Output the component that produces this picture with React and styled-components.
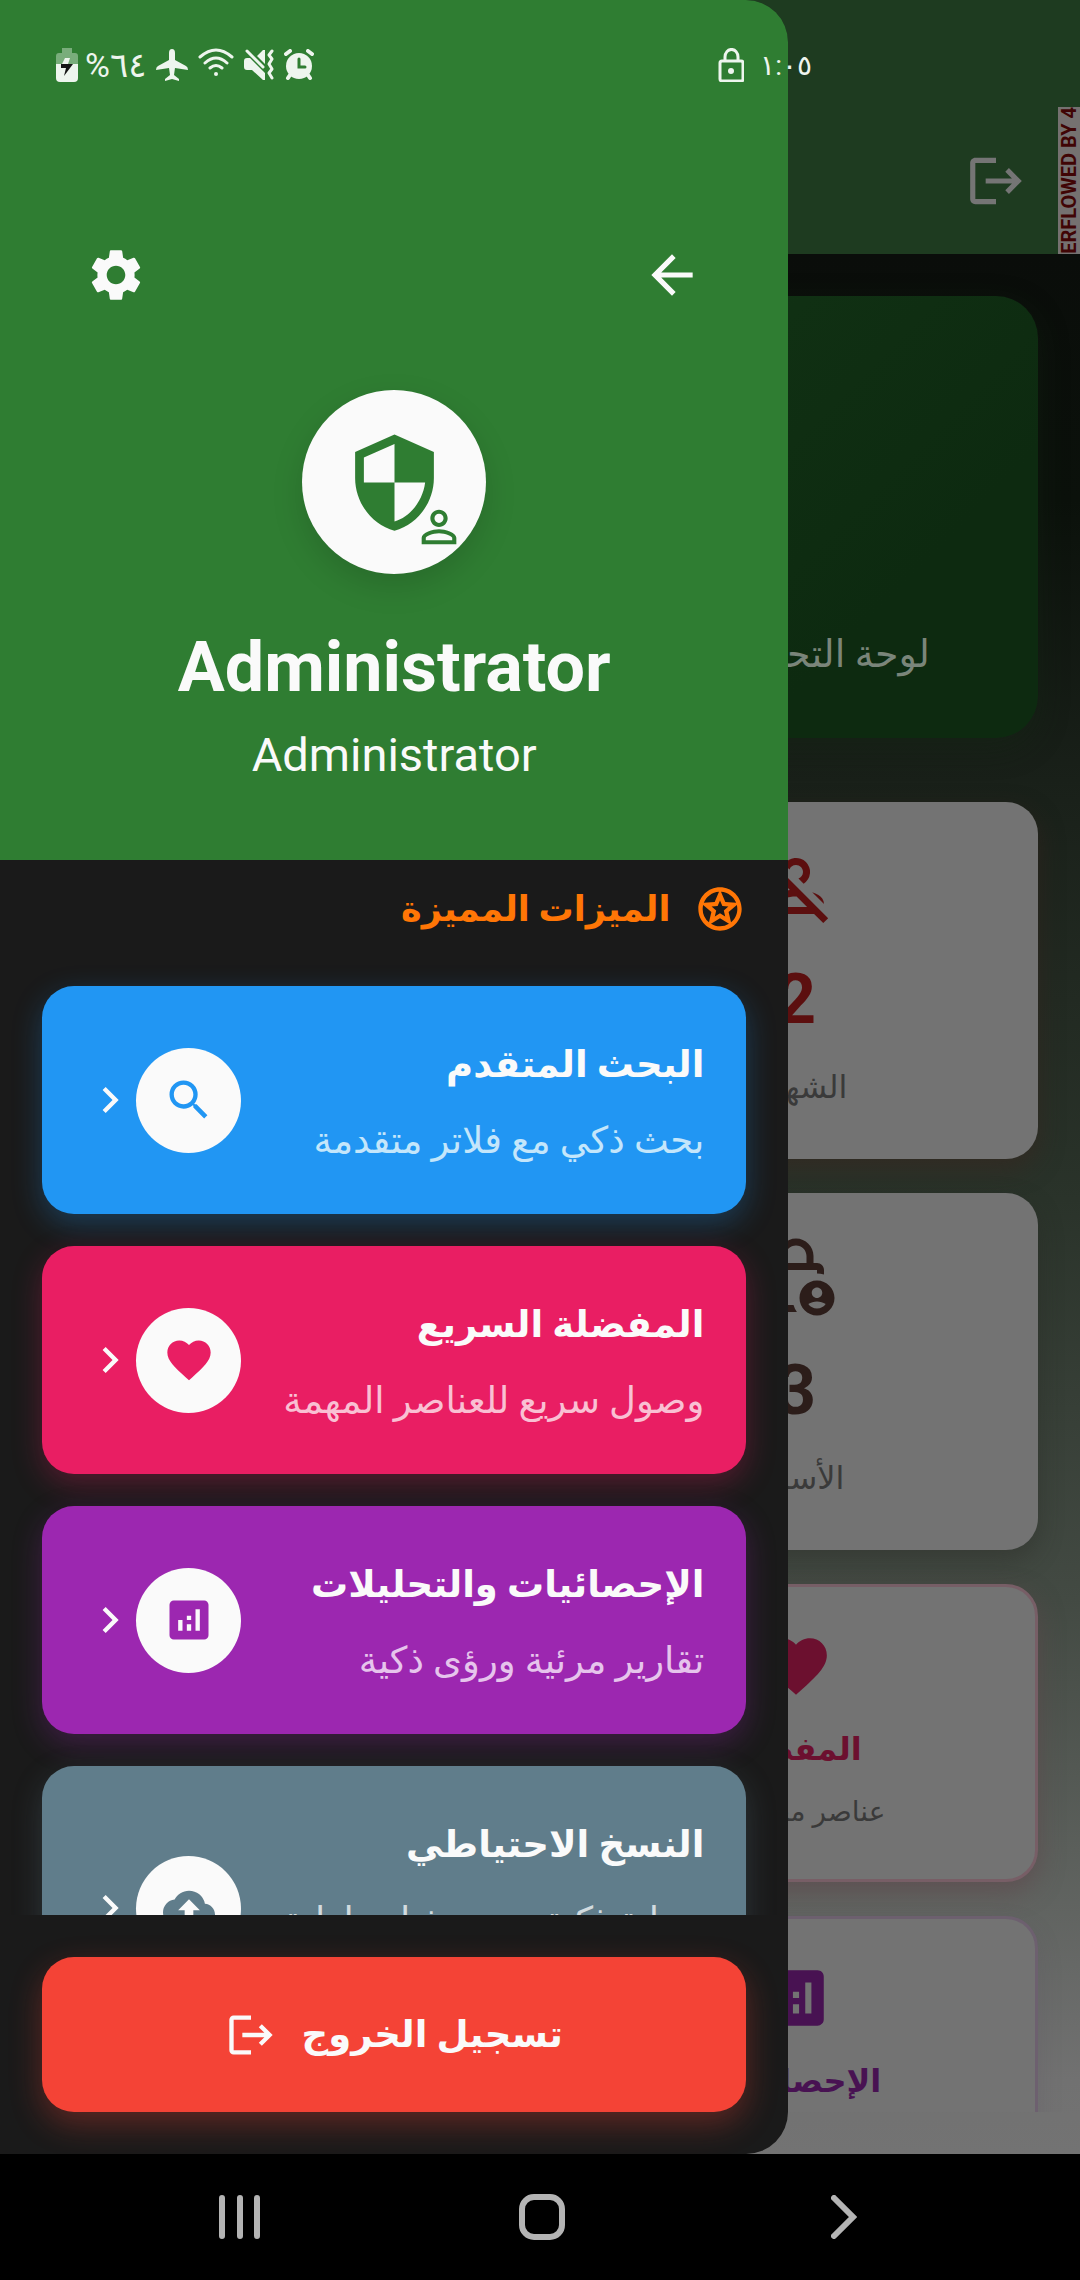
import React from "react";
import styled, { createGlobalStyle } from "styled-components";
import {
  MdSettings, MdArrowBack, MdSecurity, MdPersonOutline, MdLogout, MdOutlineStars, MdSearch,
  MdFavorite, MdAnalytics, MdBackup, MdChevronRight, MdOutlinePersonOff, MdOutlineLockPerson,
} from "react-icons/md";

const GlobalStyle = createGlobalStyle`
  * { box-sizing: border-box; }
  html, body, #root { height: 100%; }
  body { margin: 0; background: #000; font-family: Roboto, "DejaVu Sans", sans-serif; }
  button { font-family: inherit; border: 0; margin: 0; padding: 0; background: none; color: inherit; }
  h1, h2, p { margin: 0; }
  svg { display: block; flex: none; }
`;

const Device = styled.div`
  display: grid;
  grid-template-rows: minmax(0, 1fr) 126px;
  height: 100vh;
  min-height: 1600px;
`;

const Screen = styled.div`
  position: relative;
  display: flex;
  flex-direction: column;
  overflow: hidden;
`;

/* Dashboard behind the scrim */
const Dashboard = styled.main`
  position: absolute;
  inset: 0;
  display: flex;
  flex-direction: column;
  padding-bottom: 42px;
  background: linear-gradient(180deg, #0a0d0a 254px, #0b110b 500px, #1a211a 800px, #2a332a 1200px, #434a43 1600px, #5b5f5b 1850px, #717171 2080px, #737373 100%);
`;

const AppBar = styled.header`
  display: flex;
  flex: none;
  justify-content: flex-end;
  height: 254px;
  padding-top: 107px;
  background: #1e3b20;
`;

const BarButton = styled.button`
  display: grid;
  place-items: center;
  width: 124px;
  color: #757575;
`;

const OverflowStripe = styled.div`
  display: flex;
  align-items: flex-start;
  justify-content: center;
  width: 22px;
  overflow: hidden;
  background: #757170;
  color: #400505;
  font-size: 20px;
  font-weight: 700;
  line-height: 22px;
  white-space: nowrap;
`;

const StripeText = styled.span`
  writing-mode: vertical-rl;
  transform: rotate(180deg);
`;

const Board = styled.div`
  display: grid;
  flex: 1;
  grid-template-columns: 1fr 484px;
  align-content: start;
  gap: 34px 22px;
  min-height: 0;
  padding: 42px 42px 0;
  overflow: hidden;
`;

const Welcome = styled.section`
  grid-column: 1 / -1;
  display: flex;
  flex-direction: column;
  align-items: center;
  justify-content: flex-end;
  height: 442px;
  margin-bottom: 30px;
  padding-bottom: 52px;
  border-radius: 42px;
  background: linear-gradient(135deg, #163c19, #0d2a10 80%);
  box-shadow: 0 10px 30px rgba(20, 40, 20, 0.4);
  color: #7a857a;
`;

const WelcomeName = styled.h1`
  font-size: 56px;
  font-weight: 400;
  line-height: 70px;
`;

const WelcomeText = styled.p`
  margin-top: 32px;
  font-size: 38px;
  line-height: 64px;
  white-space: nowrap;
`;

const Tile = styled.article`
  grid-column: 2;
  display: flex;
  flex-direction: column;
  align-items: center;
  height: ${(p) => (p.$link ? 298 : 357)}px;
  padding-top: 42px;
  border: ${(p) => (p.$link ? `3px solid ${p.$edge}` : "0")};
  border-radius: 32px;
  background: #737373;
  box-shadow: 0 10px 24px ${(p) => p.$glow};
  color: ${(p) => p.$tint};
`;

const TileNumber = styled.strong`
  margin-top: 32px;
  font-size: 70px;
  line-height: 78px;
`;

const TileTitle = styled.h2`
  margin-top: 16px;
  font-size: 32px;
  line-height: 60px;
`;

const TileText = styled.p`
  margin-top: ${(p) => (p.$link ? 8 : 24)}px;
  color: #3a3a3a;
  font-size: ${(p) => (p.$link ? 28 : 32)}px;
  line-height: 50px;
`;

/* Drawer */
const Drawer = styled.aside`
  position: relative;
  display: flex;
  flex: 1;
  flex-direction: column;
  width: 73%;
  min-height: 0;
  overflow: hidden;
  border-radius: 0 42px 42px 0;
  background: #1a1a1a;
  color: #fafafa;
`;

const Profile = styled.section`
  display: flex;
  flex: none;
  flex-direction: column;
  align-items: center;
  height: 860px;
  padding: 212px 42px 0;
  background: #2f7d32;
`;

const ProfileActions = styled.div`
  display: flex;
  justify-content: space-between;
  align-self: stretch;
`;

const RoundButton = styled.button`
  display: grid;
  place-items: center;
  width: 148px;
  height: 126px;
`;

const Avatar = styled.div`
  position: relative;
  display: grid;
  place-items: center;
  width: 184px;
  height: 184px;
  margin-top: 52px;
  border-radius: 50%;
  background: #fafafa;
  box-shadow: 0 12px 32px rgba(0, 0, 0, 0.14);
  color: #2f7d32;
`;

const AvatarBadge = styled.span`
  position: absolute;
  right: 21px;
  bottom: 21px;
`;

const ProfileName = styled.h1`
  margin-top: 50px;
  font-size: 70px;
  line-height: 86px;
`;

const ProfileRole = styled.p`
  margin-top: 15px;
  font-size: 47px;
  line-height: 60px;
`;

const Scroller = styled.section`
  flex: 1;
  min-height: 0;
  padding: 0 42px;
  overflow: hidden;
`;

const SectionTitle = styled.h2`
  display: flex;
  align-items: center;
  gap: 24px;
  height: 98px;
  margin-bottom: 28px;
  color: #ff7606;
  font-size: 35px;
`;

const FeatureList = styled.div`
  display: grid;
  gap: 32px;
`;

const Feature = styled.button`
  display: flex;
  align-items: center;
  width: 100%;
  height: ${(p) => (p.$tall ? 284 : 228)}px;
  padding: 0 42px;
  border-radius: 32px;
  background: ${(p) => p.$color};
  box-shadow: 0 10px 30px ${(p) => p.$color}48;
  text-align: right;
`;

const FeatureCopy = styled.span`
  display: flex;
  flex: 1;
  flex-direction: column;
  gap: 16px;
  align-self: flex-start;
  padding-top: 47px;
`;

const FeatureTitle = styled.strong`
  font-size: 37px;
  line-height: 64px;
`;

const FeatureText = styled.span`
  color: ${(p) => p.$soft};
  font-size: 37px;
  line-height: 56px;
`;

const Bubble = styled.span`
  display: grid;
  place-items: center;
  width: 105px;
  height: 105px;
  border-radius: 50%;
  background: #fafafa;
  color: ${(p) => p.$color};
`;

const DrawerFooter = styled.footer`
  flex: none;
  padding: 42px;
`;

const LogoutButton = styled.button`
  display: flex;
  align-items: center;
  justify-content: center;
  gap: 24px;
  width: 100%;
  height: 155px;
  border-radius: 32px;
  background: #f44336;
  box-shadow: 0 12px 32px #f4433650;
  font-size: 37px;
  font-weight: 700;
`;

/* System bars */
const StatusBar = styled.div`
  position: absolute;
  inset: 42px 268px auto 56px;
  z-index: 2;
  display: flex;
  align-items: center;
  justify-content: space-between;
  height: 46px;
  color: #eef5ee;
`;

const StatusGroup = styled.div`
  display: flex;
  align-items: center;
  gap: ${(p) => p.$gap}px;
`;

const BatteryLevel = styled.span`
  font-size: 34px;
`;

const Clock = styled.span`
  font-size: 28px;
`;

const NavBar = styled.nav`
  display: flex;
  align-items: center;
  justify-content: center;
  gap: 182px;
  padding-left: 4px;
  background: #000;
  color: #b4b4b4;
`;

const NavButton = styled.button`
  display: grid;
  place-items: center;
  width: 120px;
  height: 100px;
`;

const features = [
  { title: "البحث المتقدم", text: "بحث ذكي مع فلاتر متقدمة", color: "#2196f3", soft: "#c4e6fb", Icon: MdSearch },
  { title: "المفضلة السريع", text: "وصول سريع للعناصر المهمة", color: "#e91e63", soft: "#f9c0d3", Icon: MdFavorite },
  { title: "الإحصائيات والتحليلات", text: "تقارير مرئية ورؤى ذكية", color: "#9c27b0", soft: "#e6c4ec", Icon: MdAnalytics },
  { title: "النسخ الاحتياطي", text: "حماية ذكية مع نسخ احتياطية", color: "#607d8b", soft: "#d2dbdf", Icon: MdBackup, tall: true },
];

function BatteryIcon() {
  return (
    <svg width="22" height="34" viewBox="0 0 22 34">
      <path d="M6 0h10v5h3q3 0 3 3v8H0V8q0-3 3-3h3z" fill="#79ad7b" />
      <path d="M0 16h22v14q0 4-4 4H4q-4 0-4-4z" fill="#eef5ee" />
      <path d="M9 10h5l-2 6h-6z" fill="#eef5ee" />
      <path d="M5 16h12L8 28l2-8H5z" fill="#151515" />
    </svg>
  );
}

function PlaneIcon() {
  return (
    <svg width="32" height="32" viewBox="0 0 32 32" fill="currentColor">
      <path d="M13 4q0-4 3-4t3 4v7l11 6q2 1 2 4l-13-2-1 7 5 4v2l-7-2-7 2v-2l5-4-1-7-13 2q0-3 2-4l11-6z" />
    </svg>
  );
}

function WifiIcon() {
  return (
    <svg width="36" height="34" viewBox="0 0 36 34" fill="none" stroke="currentColor" strokeWidth="3" strokeLinecap="round">
      <path d="M2 9q16-14 32 0M7 15q11-10 22 0M12 20q6-5 12 0" />
      <circle cx="18" cy="26" r="2" fill="currentColor" stroke="none" />
    </svg>
  );
}

function MuteIcon() {
  return (
    <svg width="30" height="32" viewBox="0 0 30 32">
      <path d="M0 12q0-3 3-3h3l15 15v7h-2L8 21H3q-3 0-3-3zM13 7l6-6h2v14z" fill="currentColor" />
      <path d="M3 2l18 18" fill="none" stroke="#2f7d32" strokeWidth="4" />
      <path d="M3 2l16 16" fill="none" stroke="currentColor" strokeWidth="3" strokeLinecap="round" />
      <path d="M28 2l-3 4 3 4-3 5 3 5-3 4 3 5" fill="none" stroke="currentColor" strokeWidth="3" strokeLinecap="round" strokeLinejoin="round" />
    </svg>
  );
}

function AlarmIcon() {
  return (
    <svg width="30" height="32" viewBox="0 0 30 32" fill="none" stroke="currentColor" strokeWidth="4" strokeLinecap="round">
      <circle cx="15" cy="17" r="13" fill="currentColor" stroke="none" />
      <path d="M2 5l4-3M28 5l-4-3M6 26l-2 3M24 26l2 3" />
      <path d="M15 10v8h6" stroke="#2f7d32" strokeWidth="3" />
    </svg>
  );
}

function LockIcon() {
  return (
    <svg width="26" height="34" viewBox="0 0 26 34" fill="none" stroke="currentColor" strokeWidth="3">
      <rect x="2" y="13" width="23" height="20" rx="2" />
      <path d="M7 12V9a6 7 0 0 1 13 0v3" />
      <circle cx="13" cy="23" r="3" fill="currentColor" stroke="none" />
    </svg>
  );
}

export default function App() {
  return (
    <Device>
      <GlobalStyle />
      <Screen>
        <Dashboard>
          <AppBar>
            <BarButton aria-label="تسجيل الخروج"><MdLogout size={62} /></BarButton>
            <OverflowStripe><StripeText>OVERFLOWED BY 4</StripeText></OverflowStripe>
          </AppBar>
          <Board dir="ltr">
            <Welcome dir="rtl">
              <WelcomeName>مرحباً، Administrator</WelcomeName>
              <WelcomeText>لوحة التحكم الرئيسية لإدارة النظام وقاعدة البيانات</WelcomeText>
            </Welcome>
            <Tile $tint="#5c0f0f" $glow="rgba(60, 35, 30, 0.5)" dir="rtl">
              <MdOutlinePersonOff size={84} />
              <TileNumber>2</TileNumber>
              <TileText>الشهداء</TileText>
            </Tile>
            <Tile $tint="#2c1d1a" $glow="rgba(40, 40, 35, 0.4)" dir="rtl">
              <MdOutlineLockPerson size={84} />
              <TileNumber>3</TileNumber>
              <TileText>الأسرى</TileText>
            </Tile>
            <Tile $link $edge="#775e66" $tint="#6c102f" $glow="rgba(95, 70, 75, 0.6)" dir="rtl">
              <MdFavorite size={74} />
              <TileTitle>المفضلة</TileTitle>
              <TileText $link>عناصر محفوظة</TileText>
            </Tile>
            <Tile $link $edge="#6d606f" $tint="#481252" $glow="rgba(90, 75, 95, 0.2)" dir="rtl">
              <MdAnalytics size={74} />
              <TileTitle>الإحصائيات</TileTitle>
              <TileText $link>تقارير ورؤى</TileText>
            </Tile>
          </Board>
        </Dashboard>

        <Drawer>
          <Profile>
            <ProfileActions>
              <RoundButton aria-label="الإعدادات"><MdSettings size={62} /></RoundButton>
              <RoundButton aria-label="رجوع"><MdArrowBack size={62} /></RoundButton>
            </ProfileActions>
            <Avatar>
              <MdSecurity size={105} />
              <AvatarBadge><MdPersonOutline size={52} /></AvatarBadge>
            </Avatar>
            <ProfileName>Administrator</ProfileName>
            <ProfileRole>Administrator</ProfileRole>
          </Profile>
          <Scroller>
            <SectionTitle dir="rtl"><MdOutlineStars size={52} />الميزات المميزة</SectionTitle>
            <FeatureList>
              {features.map(({ title, text, color, soft, Icon, tall }) => (
                <Feature key={title} $color={color} $tall={tall}>
                  <MdChevronRight size={52} />
                  <Bubble $color={color}><Icon size={52} /></Bubble>
                  <FeatureCopy dir="rtl">
                    <FeatureTitle>{title}</FeatureTitle>
                    <FeatureText $soft={soft}>{text}</FeatureText>
                  </FeatureCopy>
                </Feature>
              ))}
            </FeatureList>
          </Scroller>
          <DrawerFooter>
            <LogoutButton dir="rtl">تسجيل الخروج<MdLogout size={52} /></LogoutButton>
          </DrawerFooter>
        </Drawer>

        <StatusBar>
          <StatusGroup $gap={10}>
            <StatusGroup $gap={7}>
              <BatteryIcon />
              <BatteryLevel>%٦٤</BatteryLevel>
            </StatusGroup>
            <PlaneIcon />
            <WifiIcon />
            <MuteIcon />
            <AlarmIcon />
          </StatusGroup>
          <StatusGroup $gap={16}>
            <LockIcon />
            <Clock>١:٠٥</Clock>
          </StatusGroup>
        </StatusBar>
      </Screen>
      <NavBar>
        <NavButton aria-label="التطبيقات الأخيرة">
          <svg width="42" height="44" viewBox="0 0 42 44" stroke="currentColor" strokeWidth="6" strokeLinecap="round"><path d="M3 3v38M21 3v38M38 3v38" /></svg>
        </NavButton>
        <NavButton aria-label="الرئيسية">
          <svg width="48" height="48" viewBox="0 0 48 48" fill="none" stroke="currentColor" strokeWidth="6"><rect x="4" y="4" width="40" height="40" rx="12" /></svg>
        </NavButton>
        <NavButton aria-label="رجوع">
          <svg width="26" height="44" viewBox="0 0 26 44" fill="none" stroke="currentColor" strokeWidth="6" strokeLinecap="round" strokeLinejoin="miter"><path d="M3 3l19 19L3 41" /></svg>
        </NavButton>
      </NavBar>
    </Device>
  );
}
